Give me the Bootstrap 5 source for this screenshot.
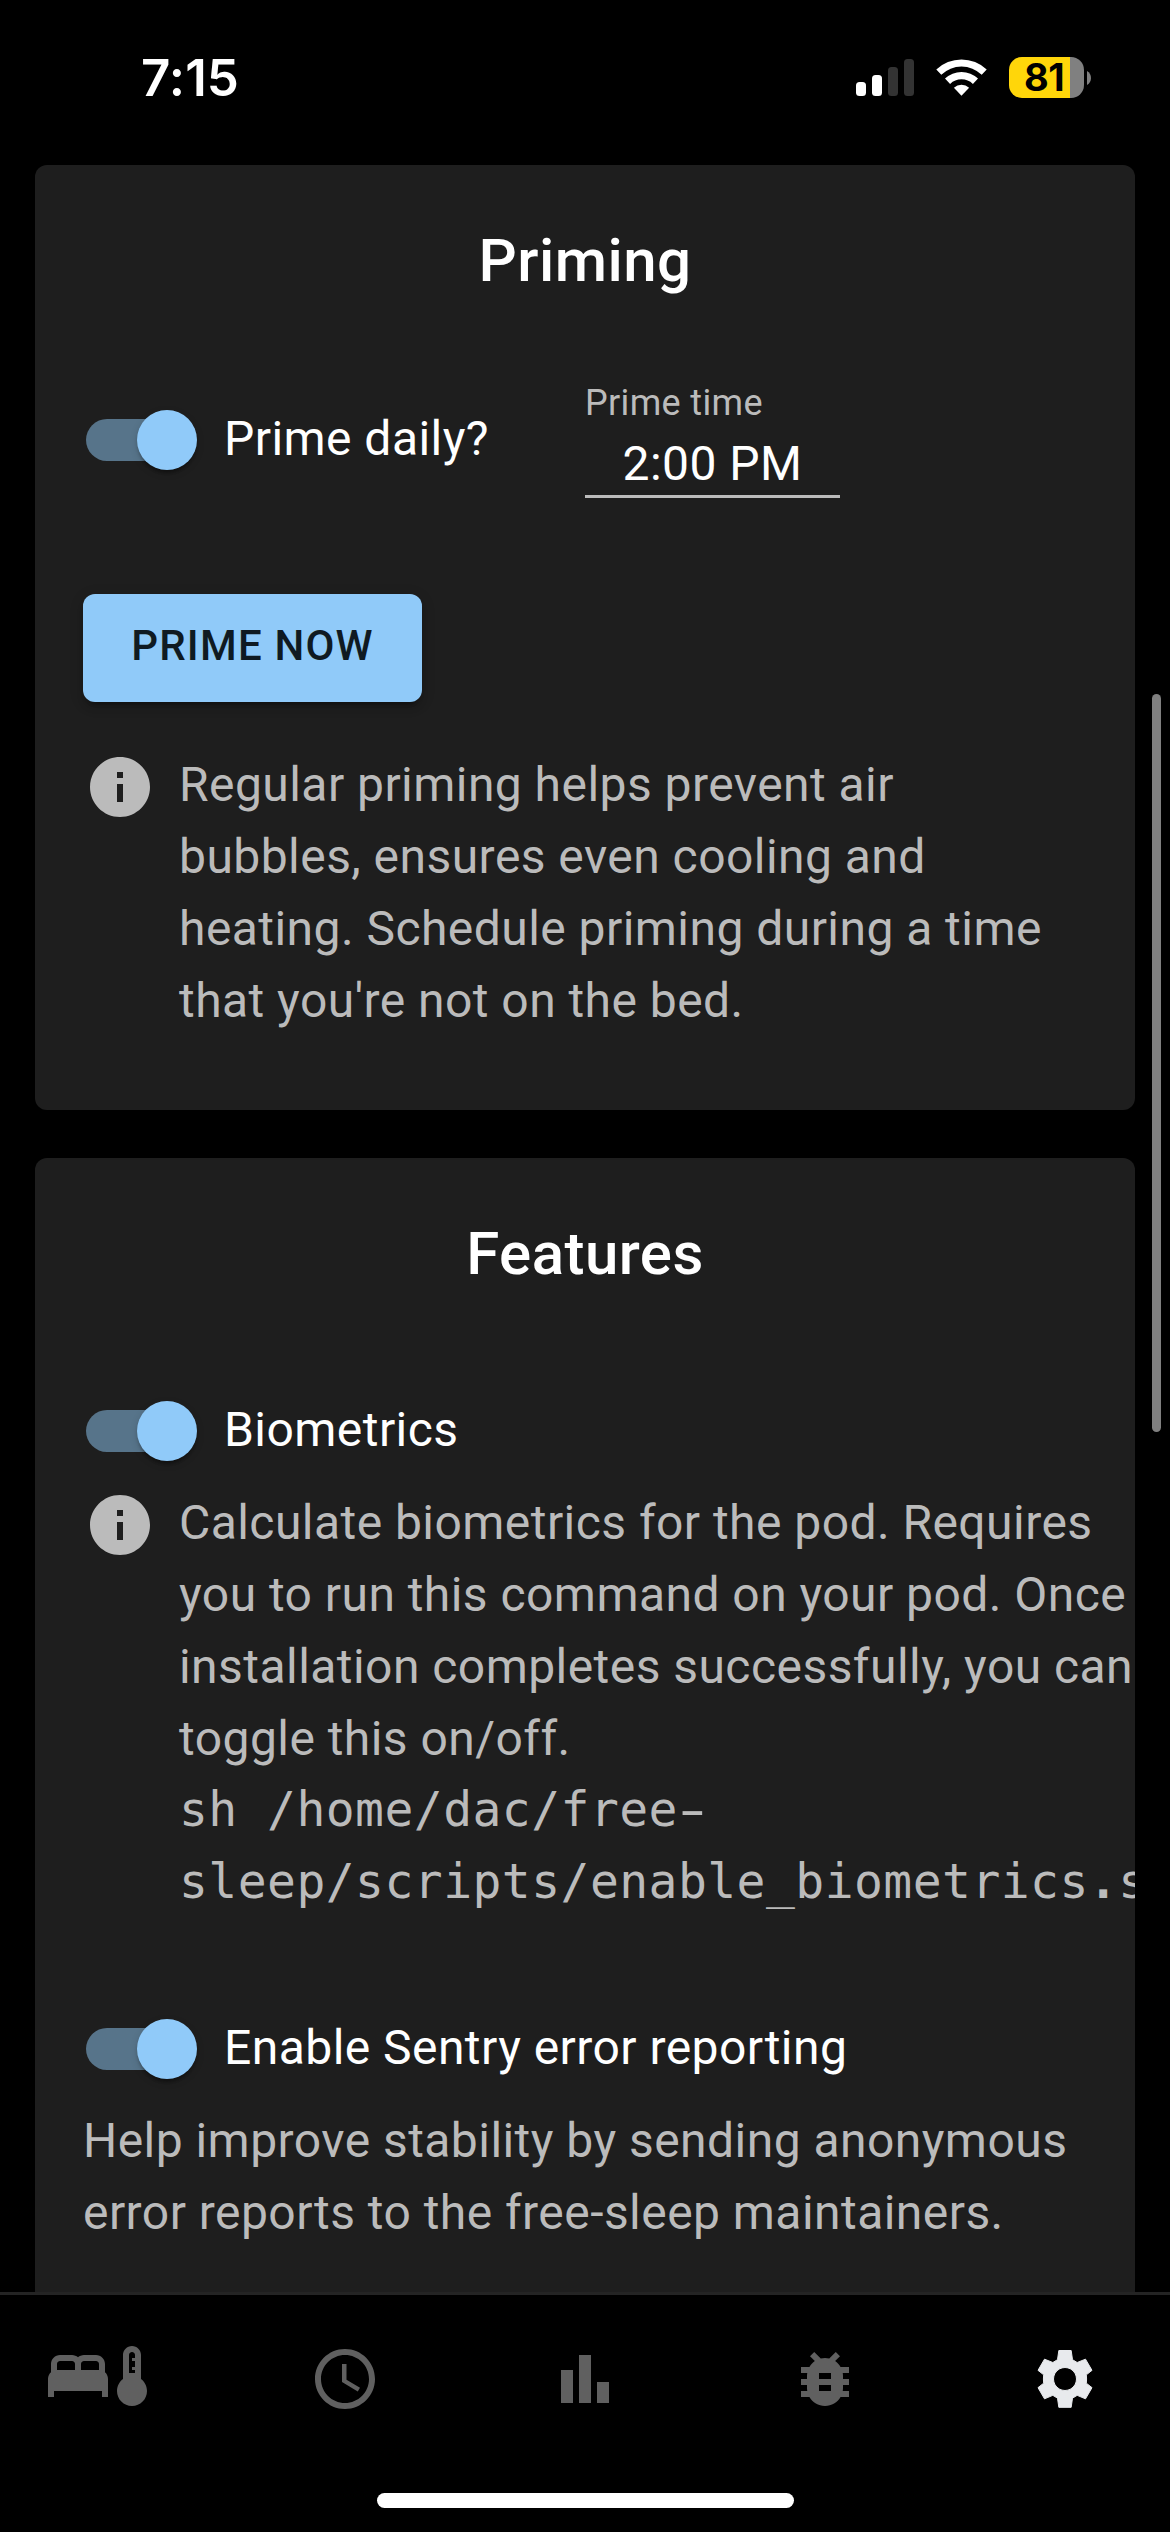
<!DOCTYPE html>
<html lang="en" data-bs-theme="dark">
<head>
<meta charset="utf-8">
<meta name="viewport" content="width=device-width, initial-scale=1">
<title>Settings</title>
<link href="https://cdn.jsdelivr.net/npm/bootstrap@5.3.0/dist/css/bootstrap.min.css" rel="stylesheet">
<style>
  html, body { height: 100%; }
  body { background: #000; color: #fff; font-family: Roboto, "Noto Sans", sans-serif; font-size: 48px; line-height: 72px; letter-spacing: .45px; }
  .status { height: 165px; padding: 57px 78px 0 141px; }
  .clock { font: 600 51px/42px Inter, sans-serif; letter-spacing: .1px; }
  .indicators { height: 41px; }
  .indicators .level { margin-left: 22px; }
  .battery { width: 75px; height: 41px; border-radius: 13px; background: linear-gradient(90deg, #ffd60a 61px, #808080 61px); color: #000; font: 700 38px/41px Inter, sans-serif; letter-spacing: -.6px; padding-left: 15px; }
  .content { padding: 0 35px; gap: 48px; }
  .panel { background: #1e1e1e; border: 0; border-radius: 12px; padding: 48px; color: #fff; }
  .panel-prime { height: 945px; }
  .panel-features { height: 1200px; }
  .panel h2 { font-size: 60px; font-weight: 500; line-height: 96px; letter-spacing: .45px; margin: 0; text-align: center; }
  .toggle { margin-left: -33px; height: 114px; }
  .toggle .knob-box { width: 174px; padding: 36px; }
  .toggle .toggle-label { padding-bottom: 2px; }
  .toggle .rail { width: 102px; height: 42px; border-radius: 21px; background: #57748a; }
  .toggle .knob { width: 60px; height: 60px; border-radius: 50%; background: #90caf9; margin-right: -9px; box-shadow: 0 6px 3px -3px rgba(0,0,0,.2), 0 3px 3px rgba(0,0,0,.14), 0 3px 9px rgba(0,0,0,.12); }
  .toggle-gap { margin-top: 72px; }
  .prime-row { margin-top: 74px; height: 114px; }
  .prime-row .toggle { width: 535px; }
  .time-field { width: 255px; height: 116px; border-bottom: 3px solid #bbb; }
  .time-field label { font-size: 36px; line-height: 40px; color: #bbb; letter-spacing: .34px; padding-top: 1px; }
  .time-value { margin-top: 5px; line-height: 72px; }
  .btn-prime { margin-top: 97px; width: 339px; height: 108px; border: 0; border-radius: 12px; background: #90caf9; color: #0f1a22; font-size: 42px; font-weight: 500; line-height: 72px; letter-spacing: 1.2px; padding: 16px 0 20px; box-shadow: 0 9px 3px -6px rgba(0,0,0,.2), 0 6px 6px rgba(0,0,0,.14), 0 3px 15px rgba(0,0,0,.12); }
  .note { color: #bbb; gap: 23px; }
  .note svg { width: 72px; height: 72px; flex: none; fill: #bbb; margin-left: 1px; }
  .note-prime { margin-top: 47px; }
  .note-prime svg { margin-top: 2px; }
  .note-features svg { margin-top: 1px; }
  .note-features .note-text { width: 998px; flex: none; height: 432px; margin-top: -1px; margin-bottom: 1px; }
  .cmd { font-family: "DejaVu Sans Mono", monospace; font-size: 48px; color: #bbb; line-height: 72px; white-space: nowrap; display: block; margin-top: -2px; }
  .cmd .dash { display: inline-block; transform: scaleX(1.6); }
  .help { color: #bbb; margin-top: -1px; }
  .tabs { height: 240px; background: #000; border-top: 3px solid #242424; padding: 45px 69px 0 42px; }
  .tabs svg { width: 72px; height: 72px; fill: #606060; display: block; }
  .tabs .thermo { margin-left: -18px; }
  .tabs .pair { width: 126px; }
  .tabs .later { margin-top: 3px; }
  .tabs .schedule { margin-left: -27px; }
  .homebar { width: 417px; height: 15px; border-radius: 8px; background: #fff; margin: 78px 0 0 335px; }
  .scroll-thumb { left: 1152px; top: 694px; width: 9px; height: 738px; border-radius: 5px; background: #808080; }
</style>
<script src="https://cdn.jsdelivr.net/npm/bootstrap@5.3.0/dist/js/bootstrap.bundle.min.js"></script>
</head>
<body class="d-flex flex-column overflow-hidden position-relative">
  <header class="status d-flex justify-content-between align-items-start flex-shrink-0">
    <div class="clock">7:15</div>
    <div class="indicators d-flex align-items-start">
      <svg width="131" height="41" viewBox="0 0 131 41" fill="#fff">
        <rect x="0" y="25" width="10" height="14" rx="3.5"/>
        <rect x="16" y="18" width="10" height="21" rx="3.5"/>
        <rect x="32" y="10" width="10" height="29" rx="3.5" fill="#333"/>
        <rect x="48" y="2" width="10" height="37" rx="3.5" fill="#333"/>
        <path d="M80.3 12.6a36.5 36.5 0 0 1 50.4 0l-5 5.2a29 29 0 0 0-40.4 0z"/>
        <path d="M89 21.6a24 24 0 0 1 33 0l-5.1 5.3a16.5 16.5 0 0 0-22.8 0z"/>
        <path d="M97.9 30.7a11.2 11.2 0 0 1 15.2 0l-7.6 8.1z"/>
      </svg>
      <div class="level d-flex align-items-center">
        <div class="battery">81</div>
        <svg width="8" height="14" viewBox="0 0 8 14" fill="#808080"><path d="M3 0c5.3 2.5 5.3 11.5 0 14z"/></svg>
      </div>
    </div>
  </header>

  <main class="content d-flex flex-column flex-grow-1 overflow-hidden">
    <section class="panel panel-prime card flex-shrink-0 overflow-hidden">
      <h2>Priming</h2>
      <div class="prime-row d-flex align-items-center">
        <div class="toggle d-flex align-items-center">
          <span class="knob-box"><span class="rail d-flex align-items-center justify-content-end"><span class="knob"></span></span></span>
          <span class="toggle-label">Prime daily?</span>
        </div>
        <div class="time-field d-flex flex-column">
          <label>Prime time</label>
          <div class="time-value text-center">2:00 PM</div>
        </div>
      </div>
      <button class="btn btn-prime" type="button">PRIME NOW</button>
      <div class="note note-prime d-flex align-items-start">
        <svg viewBox="0 0 24 24"><path d="M12 2C6.48 2 2 6.48 2 12s4.48 10 10 10 10-4.48 10-10S17.52 2 12 2zm1 15h-2v-6h2v6zm0-8h-2V7h2v2z"/></svg>
        <div>Regular priming helps prevent air<br>bubbles, ensures even cooling and<br>heating. Schedule priming during a time<br>that you're not on the bed.</div>
      </div>
    </section>

    <section class="panel panel-features card flex-shrink-0 overflow-hidden">
      <h2>Features</h2>
      <div class="toggle toggle-gap d-flex align-items-center">
        <span class="knob-box"><span class="rail d-flex align-items-center justify-content-end"><span class="knob"></span></span></span>
        <span class="toggle-label">Biometrics</span>
      </div>
      <div class="note note-features d-flex align-items-start">
        <svg viewBox="0 0 24 24"><path d="M12 2C6.48 2 2 6.48 2 12s4.48 10 10 10 10-4.48 10-10S17.52 2 12 2zm1 15h-2v-6h2v6zm0-8h-2V7h2v2z"/></svg>
        <div class="note-text">Calculate biometrics for the pod. Requires<br>you to run this command on your pod. Once<br>installation completes successfully, you can<br>toggle this on/off.<code class="cmd">sh /home/dac/free<span class="dash">-</span><br>sleep/scripts/enable_biometrics<b>.</b>sh</code></div>
      </div>
      <div class="toggle toggle-gap d-flex align-items-center">
        <span class="knob-box"><span class="rail d-flex align-items-center justify-content-end"><span class="knob"></span></span></span>
        <span class="toggle-label">Enable Sentry error reporting</span>
      </div>
      <div class="help">Help improve stability by sending anonymous<br>error reports to the free-sleep maintainers.</div>
    </section>
  </main>

  <nav class="tabs flex-shrink-0">
    <div class="d-flex justify-content-between align-items-start">
      <div class="pair d-flex">
        <svg class="flex-shrink-0" viewBox="0 0 24 24"><path d="M21 10.78V8c0-1.65-1.35-3-3-3h-4c-.77 0-1.47.3-2 .78-.53-.48-1.23-.78-2-.78H6C4.35 5 3 6.35 3 8v2.78c-.61.55-1 1.34-1 2.22v6h2v-2h16v2h2v-6c0-.88-.39-1.67-1-2.22zM14 7h4c.55 0 1 .45 1 1v2h-6V8c0-.55.45-1 1-1zM5 8c0-.55.45-1 1-1h4c.55 0 1 .45 1 1v2H5V8z"/></svg>
        <svg class="thermo flex-shrink-0" viewBox="0 0 24 24"><path d="M15 13V5c0-1.66-1.34-3-3-3S9 3.34 9 5v8c-1.21.91-2 2.37-2 4 0 2.76 2.24 5 5 5s5-2.24 5-5c0-1.63-.79-3.09-2-4zm-4-8c0-.55.45-1 1-1s1 .45 1 1v1h-1v1h1v2h-1v1h1v1h-2V5z"/></svg>
      </div>
      <svg class="later schedule" viewBox="0 0 24 24"><path d="M11.99 2C6.47 2 2 6.48 2 12s4.47 10 9.99 10C17.52 22 22 17.52 22 12S17.52 2 11.99 2zM12 20c-4.42 0-8-3.58-8-8s3.58-8 8-8 8 3.58 8 8-3.58 8-8 8zm.5-13H11v6l5.25 3.15.75-1.23-4.5-2.67z"/></svg>
      <svg class="later" viewBox="0 0 24 24"><path d="M4 9h4v11H4zm12 4h4v7h-4zm-6-9h4v16h-4z"/></svg>
      <svg class="later" viewBox="0 0 24 24"><path d="M20 8h-2.81c-.45-.78-1.07-1.45-1.82-1.96L17 4.41 15.59 3l-2.17 2.17C12.96 5.06 12.49 5 12 5s-.96.06-1.41.17L8.41 3 7 4.41l1.62 1.63C7.88 6.55 7.26 7.22 6.81 8H4v2h2.09c-.05.33-.09.66-.09 1v1H4v2h2v1c0 .34.04.67.09 1H4v2h2.81c1.04 1.79 2.97 3 5.19 3s4.15-1.21 5.19-3H20v-2h-2.09c.05-.33.09-.66.09-1v-1h2v-2h-2v-1c0-.34-.04-.67-.09-1H20V8zm-6 8h-4v-2h4v2zm0-4h-4v-2h4v2z"/></svg>
      <svg class="later" viewBox="0 0 216 216"><path fill="#e8eaed" stroke="#e8eaed" stroke-width="3" stroke-linejoin="round" fill-rule="evenodd" d="M89.5 22.5h37l4 27.5 14 8.5 25-10 19.5 33.5-17 13.5q1.5 12.5 0 25l17 13.5-19.5 33.5-25-10.5-14 8.5-4 27.5h-37l-4-27.5-14-8.500-25 10.500-19.500-33.500 17-13.500q-1.500-12.500 0-25l-17-13.500 19.500-33.500 25 10 14-8.500zM108 73.500a34.500 34.500 0 1 0 .01 0z"/></svg>
    </div>
    <div class="homebar"></div>
  </nav>
  <div class="scroll-thumb position-absolute"></div>
</body>
</html>
